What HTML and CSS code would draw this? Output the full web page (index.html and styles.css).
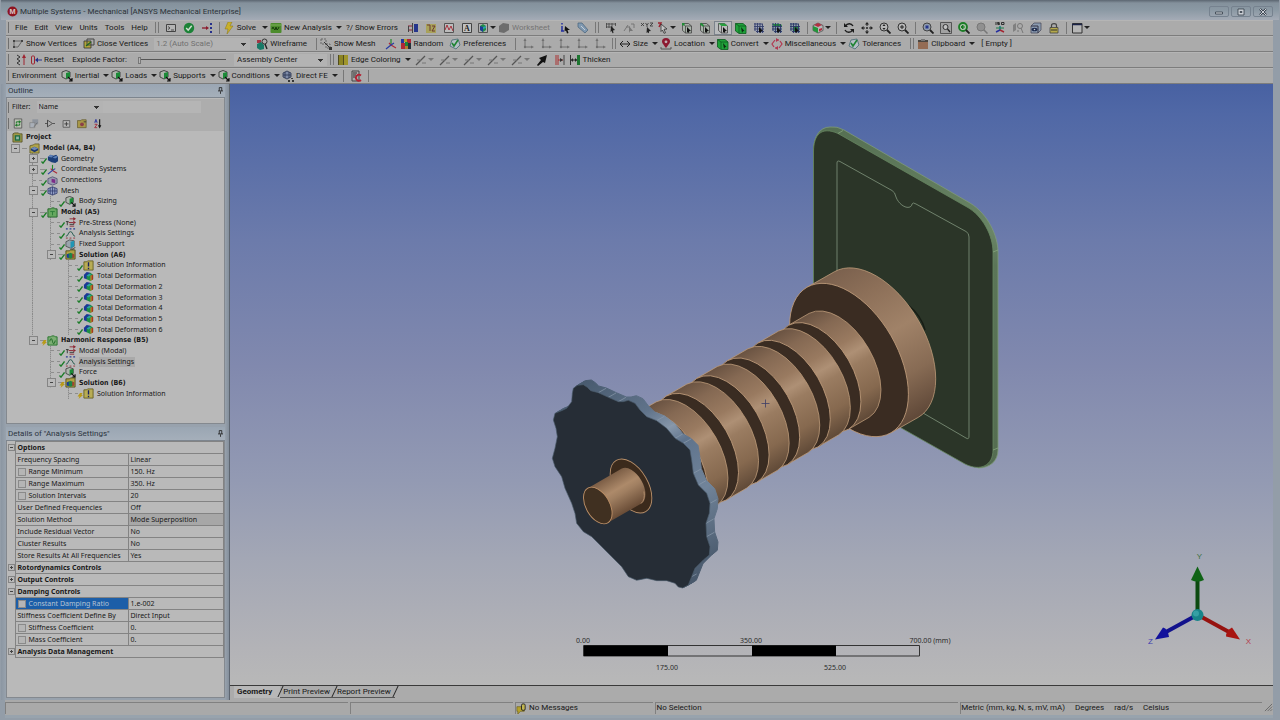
FILE: index.html
```html
<!DOCTYPE html>
<html lang="en">
<head>
<meta charset="utf-8">
<title>Multiple Systems - Mechanical [ANSYS Mechanical Enterprise]</title>
<link rel="stylesheet" href="styles.css">
</head>
<body>
<svg class="defs" aria-hidden="true">
  <defs>
    <symbol id="console" viewBox="0 0 12 12"><path d="M1.500 2.500h9v7h-9z" fill="#b4b4b4" stroke="#444"/><path d="M3 4.500l2 1.500-2 1.500M6 8h3" fill="none" stroke="#333" stroke-width=".8"/></symbol>
    <symbol id="ok" viewBox="0 0 12 12"><circle cx="6" cy="6" r="5.200" fill="#1c8237"/><path d="M3.200 6l2 2.200 3.500-4.400" fill="none" stroke="#d0e0d0" stroke-width="1.500"/></symbol>
    <symbol id="flow" viewBox="0 0 12 12"><path d="M1 6h5" stroke="#8b1a2c" stroke-width="1.300"/><path d="M5 4l3 2-3 2z" fill="#8b1a2c"/><path d="M9 1h2v2H9zM9 5h2v2H9zM9 9h2v2H9z" fill="#26308c"/></symbol>
    <symbol id="bolt" viewBox="0 0 12 12"><path d="M5 0h4L7 4h3L4 12l1-5H2z" fill="#c9b02a" stroke="#8b7716" stroke-width=".5"/></symbol>
    <symbol id="sine" viewBox="0 0 12 12"><rect x=".5" y="1" width="11" height="10" rx="1" fill="#4c8c2c"/><path d="M0 3h12" stroke="#7fae5c"/><path d="M2 7l1-2 1 2 1 1 1-3 1 3 1-1 1-2" fill="none" stroke="#173c0c"/></symbol>
    <symbol id="cols" viewBox="0 0 12 12"><path d="M7 2h4v8H7z" fill="#26368c"/><path d="M1 4h4M1 8h4" stroke="#8c2034"/><path d="M5.500 1v10M1.500 4v6" stroke="#444"/></symbol>
    <symbol id="note" viewBox="0 0 12 12"><path d="M1 2h10v9H1z" fill="#a9a25a"/><path d="M2 3h3v6M7 4h3L7 9h3" fill="none" stroke="#6c3a30"/></symbol>
    <symbol id="graph" viewBox="0 0 12 12"><path d="M1.500 1.500h9v9h-9z" fill="#bcbcbc" stroke="#555"/><path d="M2 8l2-5 2 5 2-4 2 5" fill="none" stroke="#a8323c"/></symbol>
    <symbol id="note-a" viewBox="0 0 12 12"><path d="M1.500 1.500h9v9h-9z" fill="#c0c0c0" stroke="#444"/><text x="6" y="9" class="glyph">A</text></symbol>
    <symbol id="image" viewBox="0 0 12 12"><path d="M1.500 1.500h9v9h-9z" fill="#b0b0b0" stroke="#555"/><path d="M3 4l3-2 3 2v4L6 10 3 8z" fill="#1f8c48"/><path d="M3 4l3 1v5L3 8z" fill="#1d3c96"/><path d="M6 5l3-1v2L6 7z" fill="#2b9faa"/></symbol>
    <symbol id="sheet" viewBox="0 0 12 12"><path d="M1 4l4-3 6 1v6l-5 3-5-1z" fill="#6d6d6d"/></symbol>
    <symbol id="info" viewBox="0 0 12 12"><path d="M3 1v1.500M3 4v5M2 9h3" stroke="#2430a0" stroke-width="1.500"/><path d="M6 4l5 4H8.500l1 3-1.500.5-1-3-1.500 1z" fill="#111"/></symbol>
    <symbol id="tag" viewBox="0 0 12 12"><path d="M1 1h4l6 7-3 3-7-6z" fill="#7f98b0" stroke="#46617b" stroke-width=".7"/><path d="M4 4l4 4" stroke="#c5ced6"/></symbol>
    <symbol id="sel-box" viewBox="0 0 12 12"><path d="M1 2h10M1 5h6M1.500 1v5M4 1v5M7 1v5M10.500 1v3" stroke="#444" stroke-width=".8"/><path d="M6 4l4 4-2 .5.500 2.500-1 .3-.8-2.300L5.500 10z" fill="#222"/></symbol>
    <symbol id="sel-mode" viewBox="0 0 12 12"><path d="M1 9l4-6M3 5h4M8 2h3v4" fill="none" stroke="#777"/><path d="M6 4l4 5H7l-1 2z" fill="#777"/></symbol>
    <symbol id="sel-xyz" viewBox="0 0 12 12"><path d="M0 1l3 3M3 1L0 4M4.500 1L6 3l1.500-2M6 3v2M9 1h3L9 4h3" fill="none" stroke="#333" stroke-width=".8"/><path d="M6 5l4 4-2 .3v2l-1.500-1L5.500 11z" fill="#222"/></symbol>
    <symbol id="cursor" viewBox="0 0 12 12"><path d="M1 1h3L2 5" fill="none" stroke="#9c2430" stroke-width="1.500"/><path d="M4 2l6 5-3 .3 1.500 3.500-1.500.5L5.500 8 4 9.500z" fill="#c4c4c4" stroke="#222" stroke-width=".7"/></symbol>
    <symbol id="cube-o" viewBox="0 0 12 12"><path d="M1.500 1.500h6l3 2.500v7h-6l-3-2.500zM4.500 4h6M4.500 4v7M1.500 1.500l3 2.500" fill="#a9b3a9" stroke="#444" stroke-width=".8"/><path d="M6 5l4 4-1.800.2L7.500 11 6 10z" fill="#111"/><path d="M1 1h2.500v2.500H1z" fill="#1f8c34"/></symbol>
    <symbol id="cube-e" viewBox="0 0 12 12"><path d="M1.500 1.500h6l3 2.500v7h-6l-3-2.500zM4.500 4h6M4.500 4v7" fill="#a9b3a9" stroke="#444" stroke-width=".8"/><path d="M1.500 1.500l3 2.500" stroke="#1f8c34" stroke-width="2"/><path d="M6 5l4 4-1.800.2L7.500 11 6 10z" fill="#111"/></symbol>
    <symbol id="cube-f" viewBox="0 0 12 12"><path d="M1.500 1.500h6l3 2.500v7h-6l-3-2.500z" fill="#bbb" stroke="#444" stroke-width=".8"/><path d="M1.500 1.500h6l3 2.500h-6z" fill="#27a03c"/><path d="M4.500 4v7" stroke="#444" stroke-width=".8"/><path d="M6 5l4 4-1.800.2L7.500 11 6 10z" fill="#111"/></symbol>
    <symbol id="cube-g" viewBox="0 0 12 12"><path d="M.5 1.500h7.500l3 2.500v7.500H4L.5 9z" fill="#1fa23a" stroke="#0d5a1e" stroke-width=".8"/><path d="M4 4h7M4 4v7M.5 1.500L4 4" stroke="#0d5a1e" stroke-width=".8"/><path d="M6 5l3.500 4-1.500.2L7 11z" fill="#0b2e12"/></symbol>
    <symbol id="cube-n" viewBox="0 0 12 12"><path d="M1 1h7l3 3v7H4L1 8z" fill="#9ea4b4"/><path d="M1 2h9M1 4.500h10M1 7h10M3 9.500h8M2 1v8M4.500 1v10M7 1v10M9.500 2v9" stroke="#35406c" stroke-width=".9"/><path d="M6 5l4 4-1.800.2L7.500 11 6 10z" fill="#111"/></symbol>
    <symbol id="cube-m" viewBox="0 0 12 12"><path d="M1 1h7l3 3v7H4L1 8z" fill="#8f9faa"/><path d="M1 2h9l1 2H3z" fill="#1f8c3a"/><path d="M1 4.500h10M1 7h10M3 9.500h8M2 1v8M4.500 1v10M7 1v10M9.500 2v9" stroke="#2b3866" stroke-width=".9"/><path d="M6 5l4 4-1.800.2L7.500 11 6 10z" fill="#111"/></symbol>
    <symbol id="cube-l" viewBox="0 0 12 12"><path d="M1 1h7l3 3v7H4L1 8z" fill="#8f9faa"/><path d="M4 4h5v5H4z" fill="#1f8c3a"/><path d="M1 2h9M1 4.500h10M1 7h10M3 9.500h8M2 1v8M4.500 1v10M7 1v10M9.500 2v9" stroke="#2b3866" stroke-width=".9"/><path d="M6 5l4 4-1.800.2L7.500 11 6 10z" fill="#111"/></symbol>
    <symbol id="views" viewBox="0 0 12 12"><path d="M6 1l5 2.500v5L6 11 1 8.500v-5z" fill="#b7b7b7" stroke="#444" stroke-width=".7"/><path d="M1 4l5 2v5L1 8.500z" fill="#23943a"/><path d="M6 1l4 2-4 2-4-2zM7 7l3-1v2L7 9.500z" fill="#b13040"/></symbol>
    <symbol id="rotate" viewBox="0 0 12 12"><path d="M10 4A4.300 4.300 0 0 0 2.500 4M2 8a4.300 4.300 0 0 0 7.500 0" fill="none" stroke="#1b1b1b" stroke-width="1.400"/><path d="M1 1v4h4zM11 11V7H7z" fill="#1b1b1b"/></symbol>
    <symbol id="move" viewBox="0 0 12 12"><path d="M6 2v8M2 6h8" stroke="#222" stroke-dasharray="2 1"/><path d="M6 0l2 2.500H4zM6 12l2-2.500H4zM0 6l2.500-2v4zM12 6L9.500 4v4z" fill="#222"/></symbol>
    <symbol id="zoom" viewBox="0 0 12 12"><circle cx="5" cy="5" r="4" fill="#b7b7b7" stroke="#333"/><path d="M8 8l3.500 3.500" stroke="#222" stroke-width="1.800"/><path d="M5 2l1.500 2h-3zM5 8l1.500-2h-3z" fill="#222"/></symbol>
    <symbol id="zoom-in" viewBox="0 0 12 12"><circle cx="5" cy="5" r="4" fill="#b7b7b7" stroke="#333"/><path d="M8 8l3.500 3.500" stroke="#222" stroke-width="1.800"/><path d="M5 3v4M3 5h4" stroke="#222"/></symbol>
    <symbol id="zoom-fit" viewBox="0 0 12 12"><circle cx="5" cy="5" r="4" fill="#8f9cb0" stroke="#444"/><path d="M8 8l3.500 3.500" stroke="#222" stroke-width="1.800"/><path d="M3.500 3.500h3v3h-3z" fill="#26368c"/></symbol>
    <symbol id="zoom-box" viewBox="0 0 12 12"><path d="M.5.5h11v11H.5z" fill="#a2a2a2" stroke="#555"/><circle cx="5.500" cy="5" r="2.500" fill="#c2c2c2" stroke="#333"/><path d="M7.500 7l2.500 3" stroke="#222" stroke-width="1.300"/></symbol>
    <symbol id="zoom-g" viewBox="0 0 12 12"><circle cx="5" cy="5" r="4" fill="#a9c0a9" stroke="#1c7d26" stroke-width="1.800"/><path d="M8 8l3.500 3.500" stroke="#222" stroke-width="1.800"/><path d="M3 5l2-2v4zM5 5h2" fill="#1c7d26" stroke="#1c7d26"/></symbol>
    <symbol id="zoom-d" viewBox="0 0 12 12"><circle cx="5" cy="5" r="4" fill="#909090" stroke="#777"/><path d="M8 8l3.500 3.500" stroke="#777" stroke-width="1.500"/></symbol>
    <symbol id="iso" viewBox="0 0 12 12"><path d="M2 0v3M5.500.5h-2v1h2v1h-2M7.500.5h2.500v2H7.500z" fill="none" stroke="#222" stroke-width=".9"/><path d="M6 8V4" stroke="#157c86" stroke-width="1.500"/><path d="M6 8l-4 2" stroke="#252fa0" stroke-width="1.500"/><path d="M6 8l4 2" stroke="#a32430" stroke-width="1.500"/><path d="M2 6h8" stroke="#1c7d46"/></symbol>
    <symbol id="look" viewBox="0 0 12 12"><path d="M1 3v7l3-2V1z" fill="#808080"/><circle cx="8" cy="4" r="2.500" fill="none" stroke="#777"/><path d="M9 6l2 5M6 8v2" stroke="#777"/></symbol>
    <symbol id="section" viewBox="0 0 12 12"><path d="M1 4l3-3h7v7l-3 3H1z" fill="#8b9bb0" stroke="#445" stroke-width=".7"/><path d="M1 4h7v7" fill="none" stroke="#334"/><ellipse cx="4.500" cy="7.500" rx="3" ry="1.800" fill="#1c2a4c"/><circle cx="4.500" cy="7.500" r=".8" fill="#ccc"/></symbol>
    <symbol id="lock" viewBox="0 0 12 12"><path d="M3.500 6V3.500C3.500 1 8.500 1 8.500 3.500V6" fill="none" stroke="#444" stroke-width="1.200"/><path d="M2 5.500h8V11H2z" fill="#b5a94a" stroke="#444" stroke-width=".8"/><path d="M3 8h6" stroke="#333"/></symbol>
    <symbol id="window" viewBox="0 0 12 12"><path d="M1.500 1.500h9.500v9.500H1.500z" fill="#b6b6b6" stroke="#333"/><path d="M1 2.500h10" stroke="#1c2448" stroke-width="1.500"/></symbol>
    <symbol id="vert" viewBox="0 0 12 12"><path d="M2 3h8L6 9H2z" fill="none" stroke="#666"/><path d="M1 2h2v2H1zM9 2h2v2H9zM1 8h2v2H1z" fill="#444"/></symbol>
    <symbol id="close-v" viewBox="0 0 12 12"><path d="M1 3h7v7H1z" fill="#b3a63a" stroke="#333" stroke-width=".8"/><path d="M4 1h7v6H4z" fill="none" stroke="#444"/><path d="M3 8l5-4" stroke="#1d661d" stroke-width="1.300"/></symbol>
    <symbol id="wire" viewBox="0 0 12 12"><path d="M1 2h4v3H1z" fill="#a33545"/><path d="M1 6l4-2 3 3v4l-4 1-3-2z" fill="#187a68"/><circle cx="8.500" cy="3.500" r="2.500" fill="none" stroke="#333"/><path d="M9 6l2 5" stroke="#222" stroke-width="1.400"/></symbol>
    <symbol id="mesh" viewBox="0 0 12 12"><path d="M1 1h5v5H1zM6 6h4v4H6z" fill="none" stroke="#666" stroke-dasharray="2 1"/><path d="M4 4l6 6" stroke="#333"/><path d="M9 9h3v3H9z" fill="#333"/></symbol>
    <symbol id="triad" viewBox="0 0 12 12"><path d="M6 7V1" stroke="#23892d" stroke-width="1.200"/><path d="M6 7l5 3M4 5l2 2" stroke="#ab2c38" stroke-width="1.200"/><path d="M6 7l-5 4M6 7l3-2" stroke="#273ba4" stroke-width="1.200"/></symbol>
    <symbol id="rand" viewBox="0 0 12 12"><path d="M1 1h3v4H1z" fill="#2436a0"/><path d="M4 1h3v3H4z" fill="#b0a030"/><path d="M7 1h4v4H7z" fill="#b02838"/><path d="M1 5h4v6H1z" fill="#b02838"/><path d="M5 4h3v4H5z" fill="#1e8438"/><path d="M8 5h3v6H8z" fill="#28303a"/><path d="M5 8h3v3H5z" fill="#b07d30"/></symbol>
    <symbol id="pref" viewBox="0 0 12 12"><path d="M3 2l6-1 2 6-4 4-6-3z" fill="#b5bfc6" stroke="#446a74" stroke-width=".8"/><path d="M3 5l2 3 4-6" fill="none" stroke="#1f8434" stroke-width="1.600"/></symbol>
    <symbol id="axis" viewBox="0 0 12 12"><path d="M3 2v7h7" fill="none" stroke="#707070"/><path d="M3 0l1.500 3h-3zM12 9L9 7.500v3z" fill="#707070"/><circle cx="3" cy="9" r="1.200" fill="#707070"/></symbol>
    <symbol id="size" viewBox="0 0 12 12"><path d="M1 6h10M4 3L1 6l3 3M8 3l3 3-3 3" fill="none" stroke="#222"/></symbol>
    <symbol id="pin" viewBox="0 0 12 12"><path d="M6 10C3 6 2 5 2 3.500a4 3.500 0 0 1 8 0C10 5 9 6 6 10z" fill="#8c1830"/><circle cx="6" cy="3.800" r="1.400" fill="#c2b0b4"/><path d="M1 9v2h10V9" fill="none" stroke="#555"/></symbol>
    <symbol id="misc" viewBox="0 0 12 12"><path d="M4 2L1 6l2 3M8 10l3-4-2-3M5 2h3M4 10h3" fill="none" stroke="#b13850" stroke-width="1.200"/><path d="M5 0v4l3-2zM7 8v4l-3-2z" fill="#b13850"/></symbol>
    <symbol id="clip" viewBox="0 0 12 12"><path d="M1 2h10v9H1z" fill="#946c54"/><path d="M1 2h10v2H1z" fill="#4b4640"/><path d="M4 1h4v2H4z" fill="#777"/></symbol>
    <symbol id="spring" viewBox="0 0 12 12"><path d="M2 1l3 2-3 2 3 2-3 2 3 2" fill="none" stroke="#333"/><path d="M9 11V3" stroke="#9e2430"/><path d="M9 0l2 4H7z" fill="#9e2430"/></symbol>
    <symbol id="reset" viewBox="0 0 12 12"><rect x="1.500" y="2" width="3" height="8" rx="1" fill="none" stroke="#9e2430"/><path d="M6 6h6" stroke="#27308c"/><path d="M5 6l3-2.500v5z" fill="#27308c"/></symbol>
    <symbol id="edgecol" viewBox="0 0 12 12"><path d="M2 1h4v10H2z" fill="#8b8424"/><path d="M7 1h4v10H7z" fill="#a0962c"/><path d="M1.500 1v10M6.500 1v10" stroke="#504c20"/></symbol>
    <symbol id="slash" viewBox="0 0 12 12"><path d="M1 11l9-9" stroke="#555" stroke-width="1.300"/><path d="M2 6h3v1M7 9h4" fill="none" stroke="#777"/></symbol>
    <symbol id="arrowb" viewBox="0 0 12 12"><path d="M11 1l-2 8-2-1-5 4-1-1 4-5-2-2z" fill="#111"/></symbol>
    <symbol id="bars" viewBox="0 0 12 12"><path d="M2 1v10M4 1v10" stroke="#a33" /><path d="M10 1v10" stroke="#444"/><path d="M4 6h5" stroke="#a33"/><path d="M9 6L6 4v4z" fill="#333"/></symbol>
    <symbol id="thick" viewBox="0 0 12 12"><path d="M1.500 1v10" stroke="#333"/><path d="M8 1h3v10H8z" fill="#1d7530"/><path d="M2 6h6" stroke="#222"/><path d="M2 6l2-2v4zM8 6L6 4v4z" fill="#222"/></symbol>
    <symbol id="load" viewBox="0 0 12 12"><path d="M1 2l4-1.500L9 2v5L5 9 1 7z" fill="#aeb6ae" stroke="#2c2c2c" stroke-width=".8"/><path d="M5 3l4-1v5L5 9z" fill="#1c8a38"/><path d="M7 7l4 4M11 8v3H8" stroke="#111" fill="none" stroke-width="1.200"/></symbol>
    <symbol id="fe" viewBox="0 0 12 12"><path d="M1 3l4-2 4 2v4L5 9 1 7z" fill="#7e8ba8" stroke="#26304c" stroke-width=".8"/><path d="M1 5l8 0M3 2v6M7 2v6" stroke="#26304c" stroke-width=".8"/><path d="M6 11h2M10 11h2M10 8v1" stroke="#111" stroke-width="1.400"/></symbol>
    <symbol id="cmd" viewBox="0 0 12 12"><path d="M2 1h7v10H2z" fill="#aaa" stroke="#444"/><path d="M3 3h4M3 5h3M3 7h2" stroke="#333"/><path d="M11 5.500A3 3 0 1 0 11 10" fill="none" stroke="#b42032" stroke-width="1.800"/></symbol>
    <symbol id="refresh" viewBox="0 0 12 12"><path d="M1.500.5h9v11h-9z" fill="#bcc0b4" stroke="#555"/><path d="M4 6V4h4M8 6v2H4" fill="none" stroke="#207a2c" stroke-width="1.200"/><path d="M7 2l3 2-3 2zM5 6L2 8l3 2z" fill="#207a2c"/></symbol>
    <symbol id="copy" viewBox="0 0 12 12"><path d="M4 1h7v6H4z" fill="#8d939c"/><path d="M1 5h6v6H1z" fill="#a9afb8" stroke="#777" stroke-width=".7"/><path d="M6 10l4-5" stroke="#666"/></symbol>
    <symbol id="funnel" viewBox="0 0 12 12"><path d="M3 2l6 4-6 4zM0 6h3M9 6h3" fill="none" stroke="#444"/><path d="M3 2v8" stroke="#444"/></symbol>
    <symbol id="plus" viewBox="0 0 12 12"><path d="M2.500 2.500h8v8h-8z" fill="#b8b8b8" stroke="#555"/><path d="M4 6.500h5M6.500 4v5" stroke="#333"/></symbol>
    <symbol id="folder" viewBox="0 0 12 12"><path d="M.5 2.500h4l1-1h5.500v9.500H.5z" fill="#a89848" stroke="#5e5528" stroke-width=".8"/><circle cx="6" cy="7" r="2.300" fill="#8c4048"/><path d="M8 4h3" stroke="#333"/></symbol>
    <symbol id="az" viewBox="0 0 12 12"><path d="M2 5l1.500-4L5 5M2.500 4h2" fill="none" stroke="#26309c"/><path d="M2 7h3l-3 4h3" fill="none" stroke="#a02030"/><path d="M8 1v8" stroke="#111" stroke-width="1.300"/><path d="M8 12L6 8h4z" fill="#111"/></symbol>
    <symbol id="project" viewBox="0 0 12 12"><path d="M1 2l2-1h4l1 1h3v9H1z" fill="#9e9848" stroke="#4d4a20" stroke-width=".8"/><path d="M3 3.500h6v6H3z" fill="#1c6c44"/><path d="M4.500 5h3v3h-3z" fill="#95b8a8"/></symbol>
    <symbol id="model" viewBox="0 0 12 12"><path d="M1 3l4-1 1-1h5v10H1z" fill="#b0a44c" stroke="#5d5520" stroke-width=".8"/><path d="M2 6l4-2 4 2v2L6 10 2 8z" fill="#1e3870"/><path d="M2 6l4-2 4 2-4 2z" fill="#6e88b4"/></symbol>
    <symbol id="geom" viewBox="0 0 12 12"><path d="M1 4l3-2 3 1 3-1 2 2v5l-3 2-4-1-4-2z" fill="#1c3e78"/><path d="M1 4l3-2 3 1-2 2zM6 5l4-2 2 1-3 2z" fill="#5d80b8"/></symbol>
    <symbol id="conn" viewBox="0 0 12 12"><path d="M1 4l5-2 5 2v5l-5 2-5-2z" fill="#9a9cb0" stroke="#44466c" stroke-width=".8"/><path d="M5 4l4 1v4L5 8z" fill="#7c2c88"/></symbol>
    <symbol id="meshc" viewBox="0 0 12 12"><path d="M1 4l5-2 5 2v5l-5 2-5-2z" fill="#8f9cc4" stroke="#2c3568" stroke-width=".8"/><path d="M1 6.500h10M3.500 3v7M6 2v9M8.500 3v7" stroke="#2c3568" stroke-width=".8"/></symbol>
    <symbol id="gfold" viewBox="0 0 12 12"><path d="M1 2h3l1-1h3l1 1h2v9H1z" fill="#66a860" stroke="#23642a"/><path d="M3.500 5h5M6 5v4" stroke="#2c7c38"/></symbol>
    <symbol id="hfold" viewBox="0 0 12 12"><path d="M1 2h3l1-1h3l1 1h2v9H1z" fill="#7cae74" stroke="#23742a"/><path d="M3 7c1-4 2-4 3 0s2 3 3-1" fill="none" stroke="#14601e"/></symbol>
    <symbol id="stress" viewBox="0 0 12 12"><path d="M1 5h3M2.500 5v4" stroke="#333"/><path d="M5 2h5M5 10h5M4 6h5" stroke="#8e2834"/><path d="M9 0l3 2-3 2zM9 4l3 2-3 2z" fill="#8e2834"/><path d="M5 8h5" stroke="#333"/></symbol>
    <symbol id="settings" viewBox="0 0 12 12"><path d="M1 1h2M5 1h2M9 1h2" stroke="#2c3a94" stroke-width="1.500"/><path d="M1 9c3 0 2-5 5-5s2 5 5 5" fill="none" stroke="#1c5448"/><path d="M1 11h2M5 11h2M9 11h2" stroke="#93303a"/></symbol>
    <symbol id="fixed" viewBox="0 0 12 12"><path d="M1 3l4-2 5 1v6L6 10 1 8z" fill="#9aa4ac" stroke="#333" stroke-width=".7"/><path d="M6 3l4-1v6l-4 2z" fill="#2096b4"/><path d="M8 12l3-3M6 12l2-2" stroke="#222"/></symbol>
    <symbol id="sol" viewBox="0 0 12 12"><path d="M1 2h4l1-1h5v10H1z" fill="#b0a044" stroke="#54501e"/><path d="M2 6l4-2 4 2v3L6 10.500 2 9z" fill="#1f8446"/><path d="M2 6l2-1v5L2 9z" fill="#2036a0"/><path d="M8 5l2 1v3l-2 1z" fill="#b0402c"/></symbol>
    <symbol id="sinfo" viewBox="0 0 12 12"><path d="M1 2h3l1-1h6v10H1z" fill="#b8ac54" stroke="#686024"/><path d="M6 2.500v4.500M6 8.500v1.500" stroke="#182060" stroke-width="1.500"/></symbol>
    <symbol id="deform" viewBox="0 0 12 12"><path d="M1 4l3-3 4 1v6L4 9 1 8z" fill="#1c3898"/><path d="M4 5l4-3 3 2v5l-3 2-4-2z" fill="#1e8f44"/><path d="M8 5l3-1v5l-3 2z" fill="#b08a28"/><path d="M9.500 4.500L11 4v5l-1.500 1z" fill="#a83422"/><path d="M4 5l3-2 2 1-3 2z" fill="#2b9fae"/></symbol>
    <symbol id="tick" viewBox="0 0 6 6"><path d="M.5 3.500L2 5.200 5.500.5" fill="none" stroke="#1c7c28" stroke-width="1.300"/></symbol>
    <symbol id="zap" viewBox="0 0 6 6"><path d="M3 0h2.500L4.500 2H6L1.500 6 2.500 3.500H.5z" fill="#b89a18"/></symbol>
    <symbol id="tack" viewBox="0 0 6 8"><path d="M1.500 4.500v-4h3v4M0 4.500h6M3 5v3" fill="none" stroke="#222"/></symbol>
  </defs>
</svg>

<div class="app">
  <header class="title">
    <svg class="logo" viewBox="0 0 12 12"><circle cx="6" cy="6" r="5.500" fill="#8e1420"/><text x="6" y="9" class="logo-m">M</text></svg>
    <h1>Multiple Systems - Mechanical [ANSYS Mechanical Enterprise]</h1>
    <div class="winbtns">
      <button aria-label="Minimize"><svg viewBox="0 0 10 8"><path d="M1.500 4h7v2h-7z" fill="#ccd0d6" stroke="#333c48" stroke-width=".8"/></svg></button>
      <button aria-label="Maximize"><svg viewBox="0 0 10 8"><path d="M2 1h6v6H2zM4 3.500h2v1H4z" fill="#ccd0d6" stroke="#333c48" stroke-width=".8"/></svg></button>
      <button aria-label="Close"><svg viewBox="0 0 10 8"><path d="M2 1l6 6M8 1L2 7" stroke="#333c48" stroke-width="2.200"/><path d="M2 1l6 6M8 1L2 7" stroke="#ccd0d6"/></svg></button>
    </div>
  </header>

  <div class="bar">
    <nav class="menu"><button>File</button><button>Edit</button><button>View</button><button>Units</button><button>Tools</button><button>Help</button></nav>
    <i class="grip two"></i>
    <button class="b" aria-label="Console"><svg><use href="#console"/></svg></button>
    <button class="b" aria-label="Check"><svg><use href="#ok"/></svg></button>
    <button class="b" aria-label="Flow"><svg><use href="#flow"/></svg></button>
    <i class="sep"></i>
    <button class="t dd wide"><svg><use href="#bolt"/></svg>Solve</button>
    <button class="t dd"><svg><use href="#sine"/></svg>New Analysis</button>
    <button class="t noicon">?/ Show Errors</button>
    <button class="b" aria-label="Columns"><svg><use href="#cols"/></svg></button>
    <button class="b" aria-label="Comment"><svg><use href="#note"/></svg></button>
    <button class="b" aria-label="Chart"><svg><use href="#graph"/></svg></button>
    <button class="b" aria-label="Annotation"><svg><use href="#note-a"/></svg></button>
    <button class="b dd" aria-label="Image"><svg><use href="#image"/></svg></button>
    <button class="t off" disabled><svg><use href="#sheet"/></svg>Worksheet</button>
    <button class="b" aria-label="Selection information"><svg><use href="#info"/></svg></button>
    <button class="b" aria-label="Tag"><svg><use href="#tag"/></svg></button>
    <i class="grip two"></i>
    <button class="b" aria-label="Label"><svg><use href="#sel-box"/></svg></button>
    <button class="b" aria-label="Direction"><svg><use href="#sel-mode"/></svg></button>
    <button class="b" aria-label="Coordinates"><svg><use href="#sel-xyz"/></svg></button>
    <button class="b dd" aria-label="Select mode"><svg><use href="#cursor"/></svg></button>
    <button class="b" aria-label="Vertex"><svg><use href="#cube-o"/></svg></button>
    <button class="b" aria-label="Edge"><svg><use href="#cube-e"/></svg></button>
    <button class="b on" aria-label="Face"><svg><use href="#cube-f"/></svg></button>
    <button class="b" aria-label="Body"><svg><use href="#cube-g"/></svg></button>
    <button class="b" aria-label="Node"><svg><use href="#cube-n"/></svg></button>
    <button class="b" aria-label="Element face"><svg><use href="#cube-m"/></svg></button>
    <button class="b" aria-label="Element"><svg><use href="#cube-l"/></svg></button>
    <i class="sep"></i>
    <button class="b dd" aria-label="Extend"><svg><use href="#views"/></svg></button>
    <i class="sep"></i>
    <button class="b" aria-label="Rotate"><svg><use href="#rotate"/></svg></button>
    <button class="b" aria-label="Pan"><svg><use href="#move"/></svg></button>
    <button class="b" aria-label="Zoom"><svg><use href="#zoom"/></svg></button>
    <button class="b" aria-label="Box zoom"><svg><use href="#zoom-in"/></svg></button>
    <i class="sep"></i>
    <button class="b" aria-label="Zoom to fit"><svg><use href="#zoom-fit"/></svg></button>
    <button class="b" aria-label="Magnifier"><svg><use href="#zoom-box"/></svg></button>
    <button class="b" aria-label="Previous view"><svg><use href="#zoom-g"/></svg></button>
    <button class="b" aria-label="Next view"><svg><use href="#zoom-d"/></svg></button>
    <button class="b" aria-label="Isometric"><svg><use href="#iso"/></svg></button>
    <button class="b" aria-label="Look at"><svg><use href="#look"/></svg></button>
    <button class="b" aria-label="Manage views"><svg><use href="#section"/></svg></button>
    <button class="b" aria-label="Lock"><svg><use href="#lock"/></svg></button>
    <i class="sep"></i>
    <button class="b dd" aria-label="Viewports"><svg><use href="#window"/></svg></button>
  </div>

  <div class="bar">
    <i class="grip"></i>
    <button class="t"><svg><use href="#vert"/></svg>Show Vertices</button>
    <button class="t"><svg><use href="#close-v"/></svg>Close Vertices</button>
    <select class="scale" aria-label="Vertex scale" disabled><option>1.2 (Auto Scale)</option></select>
    <button class="t"><svg><use href="#wire"/></svg>Wireframe</button>
    <i class="sep"></i>
    <button class="t"><svg><use href="#mesh"/></svg>Show Mesh</button>
    <button class="b" aria-label="Axes"><svg><use href="#triad"/></svg></button>
    <button class="t"><svg><use href="#rand"/></svg>Random</button>
    <button class="t"><svg><use href="#pref"/></svg>Preferences</button>
    <i class="sep"></i>
    <button class="b" aria-label="Axis 1"><svg><use href="#axis"/></svg></button>
    <button class="b" aria-label="Axis 2"><svg><use href="#axis"/></svg></button>
    <button class="b" aria-label="Axis 3"><svg><use href="#axis"/></svg></button>
    <button class="b" aria-label="Axis 4"><svg><use href="#axis"/></svg></button>
    <button class="b" aria-label="Axis 5"><svg><use href="#axis"/></svg></button>
    <i class="grip two"></i>
    <button class="t dd"><svg><use href="#size"/></svg>Size</button>
    <button class="t dd"><svg><use href="#pin"/></svg>Location</button>
    <button class="t dd"><svg><use href="#cube-g"/></svg>Convert</button>
    <button class="t dd"><svg><use href="#misc"/></svg>Miscellaneous</button>
    <button class="t"><svg><use href="#pref"/></svg>Tolerances</button>
    <i class="grip two"></i>
    <button class="t dd"><svg><use href="#clip"/></svg>Clipboard</button>
    <output>[ Empty ]</output>
  </div>

  <div class="bar">
    <i class="grip"></i>
    <button class="b" aria-label="Explode"><svg><use href="#spring"/></svg></button>
    <button class="t"><svg><use href="#reset"/></svg>Reset</button>
    <label class="explode" for="explode">Explode Factor:</label>
    <input id="explode" type="range" min="0" max="100" value="0">
    <select class="center" aria-label="Explode center"><option>Assembly Center</option></select>
    <i class="grip two"></i>
    <button class="t dd"><svg><use href="#edgecol"/></svg>Edge Coloring</button>
    <button class="b dd dim" aria-label="Edge 0"><svg><use href="#slash"/></svg></button>
    <button class="b dd dim" aria-label="Edge 1"><svg><use href="#slash"/></svg></button>
    <button class="b dd dim" aria-label="Edge 2"><svg><use href="#slash"/></svg></button>
    <button class="b dd dim" aria-label="Edge 3"><svg><use href="#slash"/></svg></button>
    <button class="b dd dim" aria-label="Edge X"><svg><use href="#slash"/></svg></button>
    <button class="b" aria-label="Edge direction"><svg><use href="#arrowb"/></svg></button>
    <button class="b" aria-label="Spacing"><svg><use href="#bars"/></svg></button>
    <button class="t"><svg><use href="#thick"/></svg>Thicken</button>
  </div>

  <div class="bar">
    <i class="grip"></i>
    <span class="env">Environment</span>
    <button class="t dd"><svg><use href="#load"/></svg>Inertial</button>
    <button class="t dd"><svg><use href="#load"/></svg>Loads</button>
    <button class="t dd"><svg><use href="#load"/></svg>Supports</button>
    <button class="t dd"><svg><use href="#load"/></svg>Conditions</button>
    <button class="t dd"><svg><use href="#fe"/></svg>Direct FE</button>
    <i class="sep"></i>
    <button class="b" aria-label="Commands"><svg><use href="#cmd"/></svg></button>
    <i class="sep"></i>
  </div>

  <div class="work">
    <aside class="side">
      <section class="panel outline">
        <h2>Outline<svg><use href="#tack"/></svg></h2>
        <div class="filter">
          <i class="grip"></i>
          <label for="filter">Filter:</label>
          <select id="filter"><option>Name</option></select>
          <input type="text" aria-label="Filter text">
        </div>
        <div class="filter tools">
          <i class="grip"></i>
          <button aria-label="Refresh"><svg><use href="#refresh"/></svg></button>
          <button aria-label="Duplicate"><svg><use href="#copy"/></svg></button>
          <button aria-label="Filter tree"><svg><use href="#funnel"/></svg></button>
          <button aria-label="Expand"><svg><use href="#plus"/></svg></button>
          <button aria-label="Folder"><svg><use href="#folder"/></svg></button>
          <button aria-label="Sort"><svg><use href="#az"/></svg></button>
        </div>
        <ul class="tree">
          <li class="l0"><span class="ic"><svg><use href="#project"/></svg></span><b>Project</b></li>
          <li class="l1"><i class="ex minus"></i><span class="ic"><svg><use href="#model"/></svg></span><b>Model (A4, B4)</b></li>
          <li class="l2 g1"><i class="ex more"></i><span class="ic"><svg><use href="#geom"/></svg><svg class="st"><use href="#tick"/></svg></span>Geometry</li>
          <li class="l2 g1"><i class="ex more"></i><span class="ic"><svg><use href="#triad"/></svg><svg class="st"><use href="#tick"/></svg></span>Coordinate Systems</li>
          <li class="l2 g1"><i class="ex"></i><span class="ic"><svg><use href="#conn"/></svg><svg class="st"><use href="#tick"/></svg></span>Connections</li>
          <li class="l2 g1"><i class="ex minus"></i><span class="ic"><svg><use href="#meshc"/></svg><svg class="st"><use href="#tick"/></svg></span>Mesh</li>
          <li class="l3 g1 g2"><i class="ex"></i><span class="ic"><svg><use href="#load"/></svg><svg class="st"><use href="#tick"/></svg></span>Body Sizing</li>
          <li class="l2 g1"><i class="ex minus"></i><span class="ic"><svg><use href="#gfold"/></svg><svg class="st"><use href="#tick"/></svg></span><b>Modal (A5)</b></li>
          <li class="l3 g1 g2"><i class="ex"></i><span class="ic"><svg><use href="#stress"/></svg><svg class="st"><use href="#tick"/></svg></span>Pre-Stress (None)</li>
          <li class="l3 g1 g2"><i class="ex"></i><span class="ic"><svg><use href="#settings"/></svg><svg class="st"><use href="#tick"/></svg></span>Analysis Settings</li>
          <li class="l3 g1 g2"><i class="ex"></i><span class="ic"><svg><use href="#fixed"/></svg><svg class="st"><use href="#tick"/></svg></span>Fixed Support</li>
          <li class="l3 g1 g2"><i class="ex minus"></i><span class="ic"><svg><use href="#sol"/></svg><svg class="st"><use href="#tick"/></svg></span><b>Solution (A6)</b></li>
          <li class="l4 g1 g3"><i class="ex"></i><span class="ic"><svg><use href="#sinfo"/></svg><svg class="st"><use href="#tick"/></svg></span>Solution Information</li>
          <li class="l4 g1 g3"><i class="ex"></i><span class="ic"><svg><use href="#deform"/></svg><svg class="st"><use href="#tick"/></svg></span>Total Deformation</li>
          <li class="l4 g1 g3"><i class="ex"></i><span class="ic"><svg><use href="#deform"/></svg><svg class="st"><use href="#tick"/></svg></span>Total Deformation 2</li>
          <li class="l4 g1 g3"><i class="ex"></i><span class="ic"><svg><use href="#deform"/></svg><svg class="st"><use href="#tick"/></svg></span>Total Deformation 3</li>
          <li class="l4 g1 g3"><i class="ex"></i><span class="ic"><svg><use href="#deform"/></svg><svg class="st"><use href="#tick"/></svg></span>Total Deformation 4</li>
          <li class="l4 g1 g3"><i class="ex"></i><span class="ic"><svg><use href="#deform"/></svg><svg class="st"><use href="#tick"/></svg></span>Total Deformation 5</li>
          <li class="l4 g1 g3"><i class="ex"></i><span class="ic"><svg><use href="#deform"/></svg><svg class="st"><use href="#tick"/></svg></span>Total Deformation 6</li>
          <li class="l2"><i class="ex minus"></i><span class="ic"><svg><use href="#hfold"/></svg><svg class="st"><use href="#zap"/></svg></span><b>Harmonic Response (B5)</b></li>
          <li class="l3 g2"><i class="ex"></i><span class="ic"><svg><use href="#stress"/></svg><svg class="st"><use href="#tick"/></svg></span>Modal (Modal)</li>
          <li class="l3 g2"><i class="ex"></i><span class="ic"><svg><use href="#settings"/></svg><svg class="st"><use href="#tick"/></svg></span><span class="current">Analysis Settings</span></li>
          <li class="l3 g2"><i class="ex"></i><span class="ic"><svg><use href="#load"/></svg><svg class="st"><use href="#tick"/></svg></span>Force</li>
          <li class="l3 g2"><i class="ex minus"></i><span class="ic"><svg><use href="#sol"/></svg><svg class="st"><use href="#zap"/></svg></span><b>Solution (B6)</b></li>
          <li class="l4 g3"><i class="ex"></i><span class="ic"><svg><use href="#sinfo"/></svg><svg class="st"><use href="#zap"/></svg></span>Solution Information</li>
        </ul>
      </section>

      <section class="panel details">
        <h2>Details of "Analysis Settings"<svg><use href="#tack"/></svg></h2>
        <table>
          <colgroup><col class="c-ex"><col class="c-name"><col></colgroup>
          <tbody>
            <tr><td><i class="ex minus"></i></td><th colspan="2">Options</th></tr>
            <tr><td></td><td>Frequency Spacing</td><td>Linear</td></tr>
            <tr><td></td><td><label><input type="checkbox">Range Minimum</label></td><td>150. Hz</td></tr>
            <tr><td></td><td><label><input type="checkbox">Range Maximum</label></td><td>350. Hz</td></tr>
            <tr><td></td><td><label><input type="checkbox">Solution Intervals</label></td><td>20</td></tr>
            <tr><td></td><td>User Defined Frequencies</td><td>Off</td></tr>
            <tr><td></td><td>Solution Method</td><td class="ro">Mode Superposition</td></tr>
            <tr><td></td><td>Include Residual Vector</td><td>No</td></tr>
            <tr><td></td><td>Cluster Results</td><td>No</td></tr>
            <tr><td></td><td>Store Results At All Frequencies</td><td>Yes</td></tr>
            <tr><td><i class="ex more"></i></td><th colspan="2">Rotordynamics Controls</th></tr>
            <tr><td><i class="ex more"></i></td><th colspan="2">Output Controls</th></tr>
            <tr><td><i class="ex minus"></i></td><th colspan="2">Damping Controls</th></tr>
            <tr><td></td><td class="sel"><label><input type="checkbox">Constant Damping Ratio</label></td><td>1.e-002</td></tr>
            <tr><td></td><td>Stiffness Coefficient Define By</td><td>Direct Input</td></tr>
            <tr><td></td><td><label><input type="checkbox">Stiffness Coefficient</label></td><td>0.</td></tr>
            <tr><td></td><td><label><input type="checkbox">Mass Coefficient</label></td><td>0.</td></tr>
            <tr><td><i class="ex more"></i></td><th colspan="2">Analysis Data Management</th></tr>
          </tbody>
        </table>
      </section>
    </aside>

    <main class="view">
      <svg class="scene" viewBox="230 84 1043 601" preserveAspectRatio="xMidYMid slice" role="img" aria-label="Shaft assembly model">
        <defs>
          <linearGradient id="tube" gradientUnits="userSpaceOnUse" x1="819" y1="308" x2="879" y2="412">
            <stop offset="0" stop-color="#6a5342"/><stop offset=".15" stop-color="#856953"/><stop offset=".35" stop-color="#997a60"/><stop offset=".46" stop-color="#ae9075"/><stop offset=".56" stop-color="#9a7c61"/><stop offset=".8" stop-color="#86694f"/><stop offset="1" stop-color="#5f4937"/>
          </linearGradient>
          <linearGradient id="flange" gradientUnits="userSpaceOnUse" x1="807" y1="287" x2="891" y2="433">
            <stop offset="0" stop-color="#7b614e"/><stop offset=".2" stop-color="#8c6f58"/><stop offset=".48" stop-color="#a08268"/><stop offset=".75" stop-color="#876b54"/><stop offset="1" stop-color="#5f4838"/>
          </linearGradient>
          <linearGradient id="shaft" gradientUnits="userSpaceOnUse" x1="588" y1="488" x2="608" y2="522">
            <stop offset="0" stop-color="#7b5d45"/><stop offset=".4" stop-color="#ad8a6a"/><stop offset=".55" stop-color="#a07f61"/><stop offset="1" stop-color="#6b4e38"/>
          </linearGradient>
          <linearGradient id="rim" gradientUnits="userSpaceOnUse" x1="100" y1="60" x2="530" y2="600">
            <stop offset="0" stop-color="#46586c"/><stop offset=".3" stop-color="#60738a"/><stop offset=".42" stop-color="#8797aa"/><stop offset=".5" stop-color="#5f738c"/><stop offset=".72" stop-color="#71849a"/><stop offset="1" stop-color="#49596c"/>
          </linearGradient>
          <linearGradient id="edge" gradientUnits="userSpaceOnUse" x1="0" y1="130" x2="0" y2="470">
            <stop offset="0" stop-color="#567053"/><stop offset=".3" stop-color="#6a8566"/><stop offset=".4" stop-color="#5b7558"/><stop offset="1" stop-color="#546c50"/>
          </linearGradient>
          <path id="seg" d="M788.500 325.300l20.600-11.900a60 34.600 60 0 1 60 103.900l-20.600 11.900z"/>
          <ellipse id="ring" cx="0" cy="0" rx="60" ry="34.600" transform="translate(818.500 377.300) rotate(60)"/>
          <path id="groove" d="M779.500 333.900l10.500-6a57 32.900 60 0 1 57 98.800l-10.500 6z"/>
          <g id="section-unit"><use href="#seg"/><use href="#ring" class="face"/><use href="#groove" class="gap"/></g>
          <path id="gear" d="M100 85L112 76 130 74 142 82 152 92 175 98 205 112 235 125 250 125 265 121 285 130 300 150 320 170 350 182 380 205 405 235 430 250 450 270 455 300 460 340 475 375 500 400 510 430 508 460 498 490 500 530 510 560 508 585 490 600 465 625 455 650 445 675 428 684 415 681 405 670 380 662 350 662 320 655 290 661 265 650 245 620 215 590 185 560 155 530 130 515 110 490 105 460 95 430 75 385 65 350 45 320 37 295 45 265 52 230 48 205 40 180 45 160 65 152 80 145 95 125 97 100z"/>
        </defs>

        <g class="plate">
          <path d="M813.500 330V150C813.500 138 819 127 830 127Q837 126 844 130L970 203C988 214 998 236 998 252V450C998 461 990 468 978 468z" fill="url(#edge)" stroke="#7f9b78" stroke-width=".8"/>
          <path d="M813.500 330V152C813.500 135 821 126 838 133.500L967 207C983 216 993 236 993 252V450C993 465 981 472 965 464L880 416z" fill="#2b3528" stroke="#66855f" stroke-width=".8"/>
          <path d="M993 252l5-2M993 450l5-2M838 133.500l5-3" stroke="#86a67e" stroke-width=".8"/>
          <path d="M837 272V163Q837 160 840 161.500L892 190.500Q895 192 896 197C898 203 905 209 910 207Q912 206 912 204Q913 202 916 204L966 231.500Q969 233 969 237V436Q969 440 966 438L923 413" fill="none" stroke="#82957d" stroke-width=".8"/>
          <path d="M908 305Q921 315 925 330" fill="none" stroke="#171d15" stroke-width="1.500"/>
        </g>

        <g class="flange">
          <path d="M807 287.300l27.300-15.500a84 48.500 60 0 1 84 145.500l-27.300 15.500z" fill="url(#flange)" stroke="#bd9a79" stroke-width=".8"/>
          <ellipse rx="84" ry="48.500" transform="translate(849 360) rotate(60)" fill="#3a2c22" stroke="#bd9a79" stroke-width=".8"/>
        </g>

        <g class="tube">
          <use href="#section-unit"/>
          <use href="#section-unit" x="-30.600" y="17.700"/>
          <use href="#section-unit" x="-61.200" y="35.400"/>
          <use href="#section-unit" x="-91.800" y="53.100"/>
          <use href="#section-unit" x="-122.400" y="70.800"/>
          <use href="#section-unit" x="-153" y="88.500"/>
        </g>

        <g class="disc" transform="translate(540 360) scale(.3333)">
          <g fill="url(#rim)" stroke="url(#rim)" stroke-width="3" stroke-linejoin="round">
            <use href="#gear" transform="translate(24 -14)"/><use href="#gear" transform="translate(20 -12)"/><use href="#gear" transform="translate(16 -9)"/>
            <use href="#gear" transform="translate(12 -7)"/><use href="#gear" transform="translate(8 -5)"/><use href="#gear" transform="translate(4 -2)"/>
          </g>
          <path d="M175 98l23-13M205 112l23-13M235 125l23-13M350 182l23-13M380 205l23-13M405 235l23-13M430 250l23-13M460 340l23-13M475 375l23-13M510 430l20-11M498 490l23-13M500 530l23-13M455 650l15-8" stroke="#8c9bac" stroke-width="2"/>
          <use href="#gear" fill="#262d36" stroke="#4a5a6a" stroke-width="2" stroke-linejoin="round"/>
        </g>

        <g class="shaft">
          <ellipse rx="29.500" ry="17" transform="translate(631 486) rotate(60)" fill="#3b2a1c" stroke="#b88f69" stroke-width=".9"/>
          <path d="M587.800 488.200l34-19.600a20 11.500 60 0 1 20 34.600l-34 19.600z" fill="url(#shaft)"/>
          <path d="M641 503.500a20 11.500 60 0 0 3-12" fill="none" stroke="#c09a76" stroke-width=".8"/>
          <ellipse rx="20" ry="11.800" transform="translate(597.800 505.500) rotate(60)" fill="#403021" stroke="#c09268" stroke-width=".9"/>
        </g>

        <path d="M765.500 399.500v8M761.500 403.500h8" stroke="#3d3d66" stroke-width=".8"/>

        <g class="ruler">
          <path d="M583.500 645.500h336v10.500h-336z" fill="none" stroke="#333"/>
          <path d="M584 645.500h84v10.500h-84zM752 645.500h84v10.500h-84z" fill="#000"/>
          <text x="583" y="643">0.00</text><text x="751" y="643">350.00</text><text x="930" y="643">700.00 (mm)</text>
          <text x="667" y="670">175.00</text><text x="835" y="670">525.00</text>
        </g>

        <g class="axes">
          <path d="M1197.500 614V578" stroke="#0c4a10" stroke-width="4"/><path d="M1191 580l6.500-13.500 6.500 13.500q-6.500 3-13 0z" fill="#0f6315"/>
          <path d="M1197 615l-31 17" stroke="#12128c" stroke-width="4"/><path d="M1155 639.500l8-12q5 1 6 9.500z" fill="#12129c"/>
          <path d="M1198 615l31 17" stroke="#96120f" stroke-width="4"/><path d="M1240 639.500l-14-3q0-6 6-9z" fill="#a81410"/>
          <circle cx="1197.500" cy="615" r="6" fill="#18848a"/><circle cx="1196" cy="613.500" r="3" fill="#35a0a4"/>
          <text x="1199.500" y="559" fill="#3c7040">Y</text><text x="1248.500" y="643.500" fill="#b4384a">X</text><text x="1150.500" y="643.500" fill="#3a3ab0">Z</text>
        </g>
      </svg>
      <nav class="tabs">
        <button class="active">Geometry</button><button>Print Preview</button><button>Report Preview</button>
      </nav>
    </main>
  </div>

  <footer class="status">
    <span class="s1"></span><span class="s2"></span>
    <span class="s3"><svg viewBox="0 0 12 12"><path d="M1 4h8v5H5l-3 3V9H1z" fill="#b5a12c" stroke="#6a5f1c" stroke-width=".7"/><rect x="6" y="1" width="4" height="7" rx="1.500" fill="#c1b552" stroke="#222"/></svg>No Messages</span>
    <span class="s4">No Selection</span>
    <span class="s5"><span>Metric (mm, kg, N, s, mV, mA)</span><span>Degrees</span><span>rad/s</span><span>Celsius</span></span>
    <svg class="gripper" viewBox="0 0 10 10"><path d="M1 9l8-8M4 9l5-5M7 9l2-2" stroke="#666"/></svg>
  </footer>
</div>
</body>
</html>
```

FILE: styles.css
```css
* { box-sizing: border-box; }
body { margin: 0; background: #3c434c; color: #181818; font: 8px/12px Roboto, "Liberation Sans", sans-serif; }
button, select, input { font: inherit; color: inherit; border: 0; padding: 0; margin: 0; background: none; border-radius: 0; }
h1, h2 { margin: 0; font: inherit; }
i { font-style: normal; }
.defs { position: absolute; width: 0; height: 0; }
.glyph { font: bold 8px "Liberation Serif", serif; text-anchor: middle; fill: #222; }
.logo-m { font: bold 8px "Liberation Sans", sans-serif; text-anchor: middle; fill: #d8c4c6; }

.app { display: flex; flex-direction: column; height: 100vh; min-height: 720px; padding: 0 1px 2px; background: #939da8; }

/* title bar */
.title { display: flex; align-items: center; height: 20px; flex: none; padding: 3px 6px 0 6px; color: #2c3238; background: linear-gradient(#5c6671 0, #84919c 3px, #8b99a4 10px, #a4abb6 20px); }
.logo { width: 11px; height: 11px; margin-right: 2px; }
.title h1 { flex: 1; font-size: 8px; }
.winbtns { display: flex; gap: 2px; }
.winbtns button { display: flex; align-items: center; justify-content: center; width: 20px; height: 11px; border: 1px solid #76828f; border-radius: 2px; }
.winbtns svg { width: 10px; height: 8px; }

/* toolbars */
.bar { display: flex; align-items: center; flex: none; height: 16px; margin: 0 6px 0 5px; padding-left: 1px; background: #ababab; border-bottom: 1px solid #7d7d7d; white-space: nowrap; box-shadow: inset 0 1px #b5b5b5; }
.bar svg { width: 12px; height: 12px; flex: none; }
.menu { display: flex; align-items: center; }
.menu button { padding: 0 4px 0 3px; }
.menu::before, .grip { content: ""; width: 1px; height: 11px; margin: 0 3px 0 1px; background: #6f6f6f; flex: none; }
.grip.two { width: 4px; margin: 0 3px; border: solid #777; border-width: 0 1px; background: none; }
.sep { width: 1px; height: 12px; margin: 0 3px; background: #777; flex: none; }
.b { display: flex; align-items: center; justify-content: center; width: 18px; height: 14px; flex: none; }
.b.on { border: 1px solid #7c838c; background: #b9bbbd; }
.t { display: flex; align-items: center; padding-right: 6px; flex: none; }
.t svg { margin-right: 2px; }
.t.noicon { padding-left: 2px; }
.t.off { color: #757575; }
.dd::after { content: ""; border: solid transparent; border-width: 3px 3px 0; border-top-color: #222; margin-left: 4px; }
.t.dd { padding-right: 2px; }
.t.wide { gap: 2px; }
.t.wide svg { margin-right: 0; }
.b.dd { width: 22px; }
.b.dd::after { margin-left: 1px; }
.b.dim { width: 24px; }
.dim::after { border-top-color: #777; }
.scale, .center, #filter { appearance: none; height: 12px; background-color: #b3b3b3; background-image: linear-gradient(#333, #333), linear-gradient(#333, #333), linear-gradient(#333, #333); background-size: 5px 1px, 3px 1px, 1px 1px; background-position: right 4px top 5px, right 5px top 6px, right 6px top 7px; background-repeat: no-repeat; }
.scale { width: 96px; margin-right: 6px; padding-left: 2px; color: #707070; opacity: 1; }
.center { width: 93px; margin-left: 8px; padding-left: 3px; }
output { padding-left: 4px; }
.explode { padding: 0 11px 0 2px; }
input[type="range"] { appearance: none; width: 88px; height: 12px; }
input[type="range"]::-webkit-slider-runnable-track { height: 1px; background: #555; }
input[type="range"]::-webkit-slider-thumb { appearance: none; width: 3px; height: 7px; margin-top: -2px; border: 1px solid #777; background: #b5b5b5; }
.env { padding-right: 4px; }

/* side panels */
.work { display: flex; flex: 1; min-height: 0; }
.side { display: flex; flex-direction: column; width: 229px; padding: 0 4px 0 5px; flex: none; border-right: 1px solid #5d6570; background: linear-gradient(90deg, #8b96a2, #98a2ad 5px, #98a2ad 224px, #848f9c); }
.panel { font: 7px/10px "Noto Sans", "Open Sans", sans-serif; background: #b9b9b9; border: 1px solid #84898f; }
.panel h2 { display: flex; justify-content: space-between; align-items: center; height: 14px; margin: -1px; padding: 0 2px; font-size: 8px; font-family: Roboto, sans-serif; color: #2c343e; background: linear-gradient(#9aa6b3, #a5afba); border-bottom: 1px solid #7d858e; }
.panel h2 svg { width: 5px; height: 7px; }
.outline { height: 340px; flex: none; }
.filter { display: flex; align-items: center; height: 16px; margin-top: 2px; background: #adadad; font-size: 8px; }
.filter label { font-size: 7px; }
#filter { width: 66px; margin-left: 6px; padding-left: 2px; font-size: 7px; }
.filter input { width: 98px; height: 12px; background: #b5b5b5; }
.filter.tools { margin: 0; gap: 4px; padding-left: 0; }
.tools .grip { margin-right: 0; }
.tools button { width: 12px; height: 12px; }
.tools svg { display: block; width: 10px; height: 11px; }

.tree { list-style: none; margin: 1px 0 0; padding: 0; display: grid; grid-auto-rows: 1fr; height: 267px; }
.tree li { display: flex; align-items: center; white-space: nowrap; min-height: 0;
  --v: repeating-linear-gradient(#8b8b8b 0 1px, #a8a8a8 1px 2px);
  background-repeat: no-repeat; background-size: 1px 100%; }
.tree b { font: bold 7px/10px "DejaVu Sans Condensed", "DejaVu Sans", sans-serif; }
.l0 { padding-left: 3px; }
.l1 { padding-left: 3px; }
.l2 { padding-left: 21px; }
.l3 { padding-left: 39px; }
.l4 { padding-left: 57px; }
.g1 { background-image: var(--v); background-position: 25px 0; }
.g2 { background-image: var(--v); background-position: 43px 0; }
.g1.g2 { background-image: var(--v), var(--v); background-position: 25px 0, 43px 0; }
.g3 { background-image: var(--v); background-position: 61px 0; }
.g1.g3 { background-image: var(--v), var(--v); background-position: 25px 0, 61px 0; }
.tree .ex { display: flex; align-items: center; width: 17px; height: 8px; flex: none; }
.tree .ex::after { content: ""; width: 9px; margin-left: 5px; border-top: 1px dashed #8d8d8d; }
.tree .ex.minus::after, .tree .ex.more::after { margin-left: 2px; }
.minus::before, .more::before { content: ""; width: 7px; height: 7px; margin-left: 1px; flex: none; border: 1px solid #858585;
  background: linear-gradient(#444, #444) center / 3px 1px no-repeat #b9b9b9; }
.more::before { background: linear-gradient(#444, #444) center / 3px 1px no-repeat, linear-gradient(#444, #444) center / 1px 3px no-repeat #b9b9b9; }
.ic { position: relative; width: 14px; height: 11px; flex: none; margin-right: 2px; }
.ic svg { display: block; width: 11px; height: 11px; margin-left: 2px; }
.ic .st { position: absolute; left: -6px; top: 5px; width: 6px; height: 6px; }
.current { background: #a9a9a9; padding-right: 1px; }

.details { flex: 1; margin: 3px 0 2px; }
.details table { width: 100%; margin-top: 1px; table-layout: fixed; border-collapse: collapse; }
.details tr { height: 12px; }
.details td, .details th { height: 12px; padding: 0 2px; border: 1px solid #838383; text-align: left; white-space: nowrap; overflow: hidden; line-height: 10px; }
.details td:first-child { padding: 0; border-top: 0; border-bottom: 0; border-left: 0; }
.details td .ex { display: block; }
.details td .ex::before { display: block; width: 5px; height: 5px; }
.c-ex { width: 8px; }
.c-name { width: 113px; }
.details label { display: flex; align-items: center; }
.details input { appearance: none; width: 8px; height: 8px; margin-right: 3px; border: 1px solid #8a8a8a; background: #b5b5b5; }
.details .sel { background: #1c5ea8; color: #b6c3d3; }
.details .ro { background: #a7a7a7; }

/* graphics window */
.view { display: flex; flex-direction: column; flex: 1; min-width: 0; margin-right: 6px; padding-bottom: 2px; background: #ababab; }
.scene { flex: 1; width: 100%; min-height: 0; border-bottom: 1px solid #3a3a3a; background: linear-gradient(#4861a2, #5068a6 5%, #6c7bab 26%, #8189ae 47%, #939ab3 66%, #a3a7b5 79%, #b3b3b7 94%, #b8b8b8); }
.tube { fill: url(#tube); stroke: #bd9a79; stroke-width: .8px; }
.face { fill: #3a2c22; }
.gap { fill: #3a2c22; stroke: none; }
.ruler text { font: 7px "Noto Sans", sans-serif; text-anchor: middle; fill: #2b2b2b; }
.axes text { font: 8px "Liberation Sans", sans-serif; text-anchor: middle; }
.tabs { display: flex; height: 12px; flex: none; padding-left: 4px; font-size: 8px; }
.tabs button { position: relative; padding: 0 4px 0 3px; border-bottom: 1px solid #555; }
.tabs button::after { content: ""; position: absolute; right: -1px; top: 0; height: 11px; border-left: 1px solid #222; transform: skewX(-25deg); }
.tabs .active { padding-right: 8px; font-weight: 700; border-color: #b8b8b8; background: #b8b8b8; }

/* status bar */
.status { display: flex; align-items: center; flex: none; height: 18px; margin: 0 6px 0 4px; background: #a9a9a9; border-bottom: 3px solid #98a3ad; gap: 2px; }
.status > span { display: flex; align-items: center; height: 12px; border: solid #808080; border-width: 1px 0 0 1px; white-space: nowrap; }
.s1 { flex: 343 0 0; }
.s2 { flex: 163 0 0; }
.s3 { flex: 138 0 0; gap: 2px; }
.s3 svg { width: 11px; height: 11px; }
.s4 { flex: 303 0 0; }
.s5 { flex: 302 0 0; gap: 10px; }
.gripper { width: 9px; height: 9px; }
```
